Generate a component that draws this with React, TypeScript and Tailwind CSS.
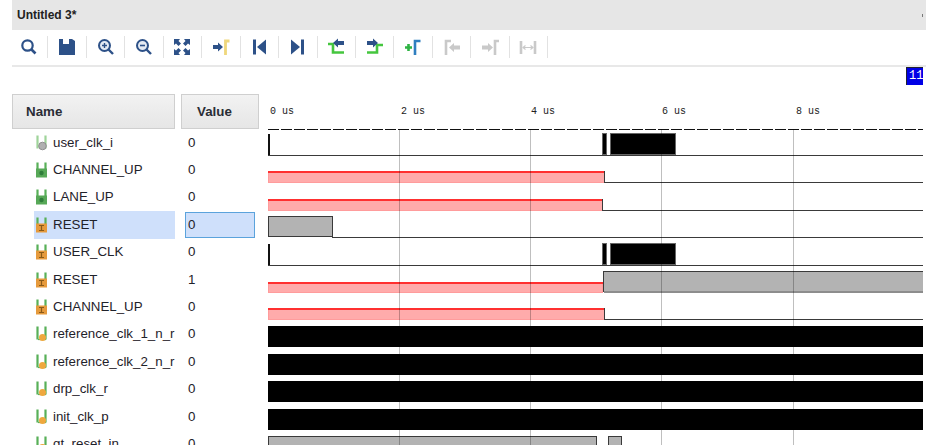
const navy = "#2d5188";
const green = "#45c63f";
const yellow = "#efd77c";
const gray = "#c9c9c9";

const toolIcons = [
  // search
  <>
    <circle cx="7.500" cy="7.500" r="5.200" fill="none" stroke={navy} strokeWidth="2.200" />
    <path d="M11 11L15.500 15.500" stroke={navy} strokeWidth="2.600" />
  </>,
  // save
  <path d="M1 1h4v5h6V1h3l3 2v14H1z" fill={navy} />,
  // zoom in
  <>
    <circle cx="7.500" cy="7.500" r="5.500" fill="#e4eaf3" stroke={navy} strokeWidth="2" />
    <path d="M5 7.500h5M7.500 5v5" stroke={navy} strokeWidth="1.400" />
    <path d="M11.500 11.500L16 16" stroke={navy} strokeWidth="2.400" />
  </>,
  // zoom out
  <>
    <circle cx="7.500" cy="7.500" r="5.500" fill="#e4eaf3" stroke={navy} strokeWidth="2" />
    <path d="M5 7.500h5" stroke={navy} strokeWidth="1.600" />
    <path d="M11.500 11.500L16 16" stroke={navy} strokeWidth="2.400" />
  </>,
  // fit
  <g fill={navy}>
    <path d="M1 1h6L5.500 3 8 5.500 5.500 8 3 5.500 1 7z" />
    <path d="M17 1v6l-2-1.500L12.500 8 10 5.500 12.500 3 11 1z" />
    <path d="M1 17v-6l2 1.500L5.500 10 8 12.500 5.500 15 7 17z" />
    <path d="M17 17h-6l1.500-2L10 12.500 12.500 10 15 12.500 17 11z" />
  </g>,
  // go to cursor
  <>
    <path d="M1 7h5V4.500l5 4.500-5 4.500V11H1z" fill={navy} />
    <path d="M13.500 17V3H17.500" fill="none" stroke={yellow} strokeWidth="2.800" />
  </>,
  // first
  <>
    <path d="M3 1.500h3v15H3z" fill={navy} />
    <path d="M16 1.500v15L7 9z" fill={navy} />
  </>,
  // last
  <>
    <path d="M12 1.500h3v15h-3z" fill={navy} />
    <path d="M2 1.500v15L11 9z" fill={navy} />
  </>,
  // previous transition
  <>
    <path d="M1 6h5v8.500h11" fill="none" stroke={green} strokeWidth="2.600" />
    <path d="M17 3h-6V0.500L6 5l5 4.500V7h6z" fill={navy} />
  </>,
  // next transition
  <>
    <path d="M1 14.500h10V7h6" fill="none" stroke={green} strokeWidth="2.600" />
    <path d="M1 3h6V0.500L12 5 7 9.500V7H1z" fill={navy} />
  </>,
  // add marker
  <>
    <path d="M1 9.500h7M4.500 6v7" stroke="#2fb344" strokeWidth="2.600" />
    <path d="M11 17V3h5.500" fill="none" stroke="#2f7fc0" strokeWidth="2.600" />
  </>,
  // previous marker
  <>
    <path d="M3 17V3h5" fill="none" stroke={gray} strokeWidth="2.600" />
    <path d="M17 7.500h-6V5L6 9.500 11 14v-2.500h6z" fill={gray} />
  </>,
  // next marker
  <>
    <path d="M1 7.500h6V5l5 4.500L7 14v-2.500H1z" fill={gray} />
    <path d="M14 17V3h4" fill="none" stroke={gray} strokeWidth="2.600" />
  </>,
  // measure
  <>
    <path d="M2 3v13M16 3v13" stroke={gray} strokeWidth="2.600" />
    <path d="M4 9.500h10M6.500 7.500l-2.500 2 2.500 2M11.500 7.500l2.500 2-2.500 2" fill="none" stroke={gray} strokeWidth="1.100" />
  </>,
];

function SignalIcon({ kind }: { kind: string }) {
  const bars = kind === "clkGray" ? "#9fd49a" : "#58b058";
  return (
    <svg width="14" height="16" viewBox="0 0 14 16" className="shrink-0">
      <path d="M2.500 0.500v13M10.500 0.500v13" stroke={bars} strokeWidth="2.200" />
      {kind === "clkGray" && <circle cx="7.500" cy="11" r="3.800" fill="#b0b0b0" stroke="#8f8f8f" />}
      {kind === "clk" && (
        <>
          <path d="M3 13.500h8" stroke="#58b058" strokeWidth="1.200" />
          <circle cx="7.500" cy="11.500" r="3.500" fill="#efa83e" />
        </>
      )}
      {kind === "green" && (
        <>
          <rect x="1" y="6.500" width="11" height="9" fill="#57a857" />
          <circle cx="6.500" cy="11" r="2.200" fill="#2f7d3a" />
        </>
      )}
      {kind === "orange" && (
        <>
          <rect x="1" y="6.500" width="11" height="9" fill="#e69a3c" />
          <path d="M4 8.500h5M6.500 8.500v5M4 13.500h5" stroke="#8a5a18" strokeWidth="1.200" />
        </>
      )}
    </svg>
  );
}

const signals = [
  { name: "user_clk_i", value: "0", kind: "clkGray" },
  { name: "CHANNEL_UP", value: "0", kind: "green" },
  { name: "LANE_UP", value: "0", kind: "green" },
  { name: "RESET", value: "0", kind: "orange", selected: true },
  { name: "USER_CLK", value: "0", kind: "orange" },
  { name: "RESET", value: "1", kind: "orange" },
  { name: "CHANNEL_UP", value: "0", kind: "orange" },
  { name: "reference_clk_1_n_r", value: "0", kind: "clk" },
  { name: "reference_clk_2_n_r", value: "0", kind: "clk" },
  { name: "drp_clk_r", value: "0", kind: "clk" },
  { name: "init_clk_p", value: "0", kind: "clk" },
  { name: "gt_reset_in", value: "0", kind: "clk" },
];

const times = [
  { label: "0 us", width: "w-[131px]" },
  { label: "2 us", width: "w-[130px]" },
  { label: "4 us", width: "w-[131px]" },
  { label: "6 us", width: "w-[134px]" },
  { label: "8 us", width: "w-[100px]" },
];

const line = "#3a3a3a";

// x/y here are relative to the wave view, which starts at (268, 129)
function Low({ x, y, end = 655 }: { x: number; y: number; end?: number }) {
  return <path d={`M${x} ${y}.5H${end}`} stroke={line} />;
}

function RedBar({ y, end }: { y: number; end: number }) {
  return (
    <>
      <rect x="0" y={y} width={end} height="11" fill="#ffabab" stroke="#ff9c9c" />
      <path d={`M0 ${y}.5H${end}`} stroke="#ff3030" strokeWidth="2" />
      <path d={`M${end}.5 ${y}V${y + 11}`} stroke={line} />
      <Low x={end} y={y + 11} />
    </>
  );
}

function ClockRow({ y }: { y: number }) {
  return (
    <>
      <path d={`M0.500 ${y}V${y + 21}`} stroke="#111" strokeWidth="2" />
      <Low x={0} y={y + 21} />
      <rect x="334.500" y={y - 0.5} width="4" height="21" fill="#000" stroke="#666" />
      <rect x="342.500" y={y - 0.5} width="65" height="21" fill="#000" stroke="#666" />
    </>
  );
}

function Solid({ y }: { y: number }) {
  return <rect x="0" y={y} width="655" height="21" fill="#000" />;
}

function Waves() {
  return (
    <svg width="655" height="316" viewBox="0 0 655 316" shapeRendering="crispEdges" className="block">
      <path d="M0 .5H655" stroke="#111" strokeDasharray="11 2" />
      <ClockRow y={5} />
      <RedBar y={42} end={336} />
      <RedBar y={70} end={334} />
      <rect x="0.500" y="87.500" width="64" height="20" fill="#b3b3b3" stroke={line} />
      <Low x={64} y={108} />
      <ClockRow y={115} />
      <rect x="0" y="153" width="334" height="10" fill="#ffabab" stroke="#ff9c9c" />
      <path d="M0 153.500H335" stroke="#ff3030" strokeWidth="2" />
      <rect x="335.500" y="142.500" width="330" height="20" fill="#b3b3b3" stroke={line} />
      <path d="M336 163H655" stroke="#8d8d8d" strokeWidth="2" />
      <RedBar y={179} end={336} />
      <Solid y={197} />
      <Solid y={225} />
      <Solid y={252} />
      <Solid y={280} />
      <rect x="0.500" y="307.500" width="328" height="20" fill="#b3b3b3" stroke={line} />
      <rect x="340.500" y="307.500" width="13" height="20" fill="#b3b3b3" stroke={line} />
      <path d="M131.500 0V316M262.500 0V316M393.500 0V316M525.500 0V316" stroke="#000" strokeOpacity="0.25" />
    </svg>
  );
}

export default function App() {
  return (
    <div className="h-[445px] w-[926px] overflow-hidden bg-white font-['Liberation_Sans',sans-serif] text-[#1f222a]">
      <div className="ml-3 flex h-[30px] items-center justify-between bg-[#e6e6e6] pl-[5px] pr-[3px]">
        <span className="text-xs font-bold text-[#222]">Untitled 3*</span>
        <span className="h-[3px] w-px bg-[#777]" />
      </div>

      <div className="ml-3 flex h-[37px] items-start border-b-2 border-[#e8e8e8] pt-[6px]">
        <div className="-ml-[2px] flex">
          {toolIcons.map((icon, i) => (
            <div key={i} className="flex h-[22px] w-[38.45px] items-center justify-center border-r border-[#e2e2e2]">
              <svg width="18" height="18" viewBox="0 0 18 18">
                {icon}
              </svg>
            </div>
          ))}
        </div>
      </div>

      <div className="flex h-[27px] justify-end pr-[3px]">
        <div className="h-[18px] w-[17px] overflow-hidden border-l border-t border-[#223] bg-[#0000e6] pl-[2px] font-['Liberation_Mono',monospace] text-xs leading-[17px] text-white">
          11
        </div>
      </div>

      <div className="flex">
        <div className="ml-3 w-[163px] shrink-0">
          <div className="flex h-[35px] items-center border border-[#cfcfcf] bg-gradient-to-b from-[#f2f2f2] to-[#e6e6e6] pl-[13px] text-[13.33px] font-bold text-[#2a2d36]">
            Name
          </div>
          {signals.map((s, i) => (
            <div
              key={i}
              className={`ml-[22px] flex h-[27.4px] items-center gap-1 overflow-hidden whitespace-nowrap pl-[1px] text-[13.33px] ${
                s.selected ? "bg-[#cfe0fb]" : ""
              }`}
            >
              <SignalIcon kind={s.kind} />
              {s.name}
            </div>
          ))}
        </div>

        <div className="ml-[6px] w-[78px] shrink-0">
          <div className="flex h-[35px] items-center border border-[#cfcfcf] bg-gradient-to-b from-[#f2f2f2] to-[#e6e6e6] pl-[15px] text-[13.33px] font-bold text-[#2a2d36]">
            Value
          </div>
          {signals.map((s, i) => (
            <div key={i} className="flex h-[27.4px] items-center text-[13.33px]">
              <div
                className={`ml-1 flex h-[26px] w-[70px] items-center ${
                  s.selected ? "border border-[#5ba3dc] bg-[#cfe0fb] pl-[2px]" : "pl-[3px]"
                }`}
              >
                {s.value}
              </div>
            </div>
          ))}
        </div>

        <div className="ml-[9px] w-[655px] shrink-0">
          <div className="flex h-[35px] items-center pl-[2px] font-['Liberation_Mono',monospace] text-[10px] text-[#222]">
            {times.map((t) => (
              <span key={t.label} className={`${t.width} shrink-0`}>
                {t.label}
              </span>
            ))}
          </div>
          <Waves />
        </div>
      </div>
    </div>
  );
}
